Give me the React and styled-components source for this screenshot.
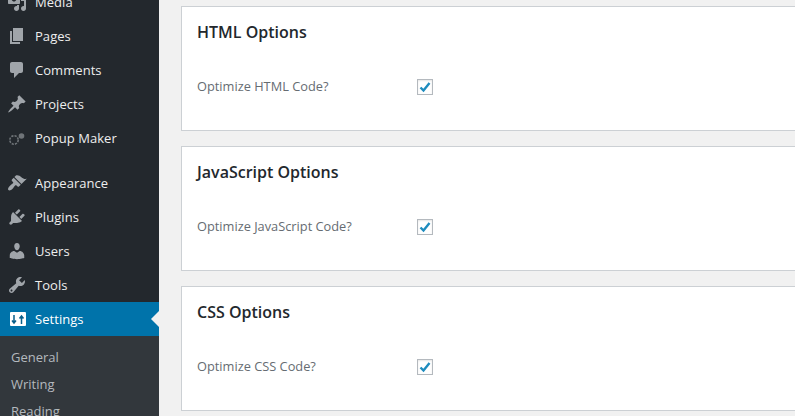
import React from 'react'
import styled, { createGlobalStyle } from 'styled-components'

const Global = createGlobalStyle`
  html, body {
    margin: 0;
    height: 416px;
    overflow: hidden;
    background: #f1f1f1;
    font-family: 'Open Sans', 'Noto Sans', sans-serif;
  }
`

const Page = styled.div`
  display: flex;
  width: 795px;
  height: 416px;
  overflow: hidden;
`

const Sidebar = styled.nav`
  width: 159px;
  flex: none;
  height: 416px;
  background: #23282d;
  overflow: hidden;
`

const Menu = styled.ul`
  list-style: none;
  margin: -15px 0 0;
  padding: 0;
`

const Item = styled.li`
  position: relative;
  display: flex;
  align-items: center;
  height: 34px;
  padding-left: 7px;
  margin-top: ${p => (p.$spaced ? '11px' : '0')};
  background: ${p => (p.$active ? '#0073aa' : 'transparent')};
  color: ${p => (p.$active ? '#fff' : '#eee')};
  font-size: 13px;
  letter-spacing: 0.05px;
`

const IconSlot = styled.span`
  display: flex;
  width: 20px;
  height: 20px;
  margin-right: 8px;
  color: ${p => (p.$active ? '#fff' : p.$dim ? '#6f7478' : '#a0a5aa')};
`

const Arrow = styled.span`
  position: absolute;
  right: 0;
  top: 9px;
  border: 8px solid transparent;
  border-right-color: #f1f1f1;
  border-left-width: 0;
`

const SubMenu = styled.ul`
  list-style: none;
  margin: 0;
  padding: 8px 0 0;
  background: #32373c;
`

const SubItem = styled.li`
  height: 27px;
  line-height: 27px;
  padding-left: 11px;
  font-size: 13px;
  color: #b4b9be;
`

const Content = styled.main`
  flex: 1;
  min-width: 0;
  display: flex;
  flex-direction: column;
  gap: 15px;
  padding: 6px 0 0 22px;
`

const Card = styled.section`
  box-sizing: border-box;
  height: 125px;
  width: 640px;
  flex: none;
  background: #fff;
  border: 1px solid #ccd0d4;
  padding: 13px 15px 0;
`

const Title = styled.h2`
  margin: 0;
  height: 24px;
  line-height: 24px;
  font-size: 16px;
  font-weight: 600;
  color: #23282d;
`

const Row = styled.div`
  display: flex;
  align-items: center;
  margin-top: 35px;
  height: 16px;
`

const Label = styled.label`
  width: 220px;
  padding-bottom: 2px;
  font-size: 12.8px;
  color: #666c72;
`

const Check = styled.span`
  box-sizing: border-box;
  display: flex;
  align-items: center;
  justify-content: center;
  width: 16px;
  height: 16px;
  border: 1px solid #b4b9be;
  background: #fff;
  box-shadow: inset 0 1px 2px rgba(0, 0, 0, 0.1);
  color: #1e8cbe;
`

const Icon = ({ children }) => (
  <svg width="20" height="20" viewBox="0 0 20 20" fill="currentColor">
    {children}
  </svg>
)

const icons = {
  media: <path d="M13 11V4c0-.55-.45-1-1-1h-1.670L9 1H5L3.670 3H2c-.55 0-1 .45-1 1v7c0 .55.45 1 1 1h10c.55 0 1-.45 1-1zM7 4.500c1.380 0 2.500 1.120 2.500 2.500S8.380 9.500 7 9.500 4.500 8.380 4.500 7 5.620 4.500 7 4.500zM14 6h5v10.500c0 1.380-1.120 2.500-2.500 2.500S14 17.880 14 16.500s1.120-2.500 2.500-2.500c.17 0 .34.02.5.05V9h-3V6zm-4 8.050V13h2v3.500c0 1.380-1.120 2.500-2.500 2.500S7 17.880 7 16.500 8.120 14 9.500 14c.17 0 .34.02.5.05z" />,
  pages: <path d="M6 15V2h10v13H6zm-1 1h8v2H3V5h2v11z" />,
  comments: <path d="M5 2h9c1.100 0 2 .9 2 2v7c0 1.100-.9 2-2 2h-2l-5 5v-5H5c-1.100 0-2-.9-2-2V4c0-1.100.9-2 2-2z" />,
  projects: <path d="M10.440 3.020l1.820-1.820 6.360 6.350-1.830 1.820c-1.050-.68-2.480-.57-3.410.36l-.75.75c-.92.93-1.040 2.350-.35 3.410l-1.830 1.820-2.410-2.410-2.800 2.790c-.42.42-3.380 2.710-3.800 2.290s1.860-3.390 2.280-3.810l2.790-2.790L4.100 9.360l1.830-1.820c1.050.69 2.480.57 3.400-.36l.75-.75c.93-.92 1.050-2.350.36-3.410z" />,
  popup: (
    <>
      <circle cx="7" cy="12" r="4.200" fill="none" stroke="currentColor" strokeWidth="1.600" strokeDasharray="2.200 1.100" />
      <circle cx="14.500" cy="8" r="2.800" />
    </>
  ),
  appearance: <path d="M14.480 11.060L7.410 3.990l1.500-1.500c.5-.56 2.300-.47 3.510.32 1.210.8 1.430 1.280 2.910 2.100 1.180.64 2.450 1.260 4.450.85zm-.71.71L6.700 4.700 4.930 6.470c-.39.39-.39 1.020 0 1.410l1.060 1.060c.39.39.39 1.030 0 1.420-.6.6-1.430 1.110-2.210 1.690-.35.26-.7.53-1.010.84C1.430 14.230.4 16.080 1.400 17.070c.99 1 2.840-.03 4.180-1.360.31-.31.58-.66.85-1.020.57-.78 1.080-1.610 1.690-2.210.39-.39 1.020-.39 1.410 0l1.060 1.060c.39.39 1.020.39 1.410 0z" />,
  plugins: <path d="M13.110 4.360L9.870 7.600 8 5.730l3.240-3.240c.35-.34 1.050-.2 1.560.32.52.51.66 1.210.31 1.550zm-8 1.770l.91-1.120 9.010 9.010-1.190.84c-.71.71-2.630 1.160-3.820 1.160H6.140L4.900 17.260c-.59.59-1.540.59-2.120 0-.59-.58-.59-1.530 0-2.120l1.240-1.240v-3.880c0-1.130.35-3.050 1.090-3.890zm7.260 3.970l3.240-3.240c.34-.35 1.040-.21 1.550.31.52.51.66 1.210.31 1.550l-3.240 3.250z" />,
  users: <path d="M10 9.250c-2.270 0-2.730-3.440-2.730-3.440C7 4.020 7.820 2 9.970 2c2.160 0 2.980 2.020 2.710 3.810 0 0-.41 3.440-2.680 3.440zm0 2.570L12.720 10c2.390 0 4.520 2.330 4.520 4.530v2.490s-3.650 1.130-7.240 1.130c-3.650 0-7.240-1.130-7.240-1.130v-2.490c0-2.250 1.940-4.480 4.470-4.480z" />,
  tools: <path d="M16.680 9.770c-1.340 1.340-3.300 1.670-4.950.99l-5.410 6.520c-.99.99-2.590.99-3.580 0s-.99-2.590 0-3.570l6.520-5.420c-.68-1.650-.35-3.610.99-4.950 1.280-1.280 3.120-1.620 4.720-1.060l-2.890 2.890 2.820 2.820 2.860-2.870c.53 1.580.18 3.390-1.080 4.650zM3.810 16.210c.4.39 1.030.39 1.420 0 .4-.4.4-1.030 0-1.430-.39-.39-1.020-.39-1.420 0-.39.4-.39 1.030 0 1.430z" />,
}

const SettingsIcon = () => (
  <svg width="20" height="20" viewBox="0 0 20 20">
    <rect x="3" y="3" width="16" height="14" rx="1" fill="#fff" />
    <path d="M7 6v8M5 11.500L7 14l2-2.500M14.500 15V7M12.500 9.500l2-2.500 2 2.500" fill="none" stroke="#0a5f8a" strokeWidth="1.500" />
  </svg>
)

const before = [
  ['Media', 'media'],
  ['Pages', 'pages'],
  ['Comments', 'comments'],
  ['Projects', 'projects'],
  ['Popup Maker', 'popup', true],
]
const after = [
  ['Appearance', 'appearance'],
  ['Plugins', 'plugins'],
  ['Users', 'users'],
  ['Tools', 'tools'],
]

const cards = [
  ['HTML Options', 'Optimize HTML Code?'],
  ['JavaScript Options', 'Optimize JavaScript Code?'],
  ['CSS Options', 'Optimize CSS Code?'],
]

const MenuRow = ({ name, icon, dim, spaced }) => (
  <Item $spaced={spaced}>
    <IconSlot $dim={dim}>
      <Icon>{icons[icon]}</Icon>
    </IconSlot>
    {name}
  </Item>
)

export default function App() {
  return (
    <Page>
      <Global />
      <Sidebar>
        <Menu>
          {before.map(([name, icon, dim]) => (
            <MenuRow key={name} name={name} icon={icon} dim={dim} />
          ))}
          {after.map(([name, icon], i) => (
            <MenuRow key={name} name={name} icon={icon} spaced={i === 0} />
          ))}
          <Item $active>
            <IconSlot $active>
              <SettingsIcon />
            </IconSlot>
            Settings
            <Arrow />
          </Item>
        </Menu>
        <SubMenu>
          <SubItem>General</SubItem>
          <SubItem>Writing</SubItem>
          <SubItem>Reading</SubItem>
        </SubMenu>
      </Sidebar>
      <Content>
        {cards.map(([title, label]) => (
          <Card key={title}>
            <Title>{title}</Title>
            <Row>
              <Label>{label}</Label>
              <Check>
                <svg width="14" height="14" viewBox="0 0 14 14">
                  <path d="M2.500 7.500l3 3L11.500 3" fill="none" stroke="currentColor" strokeWidth="2.400" />
                </svg>
              </Check>
            </Row>
          </Card>
        ))}
      </Content>
    </Page>
  )
}
